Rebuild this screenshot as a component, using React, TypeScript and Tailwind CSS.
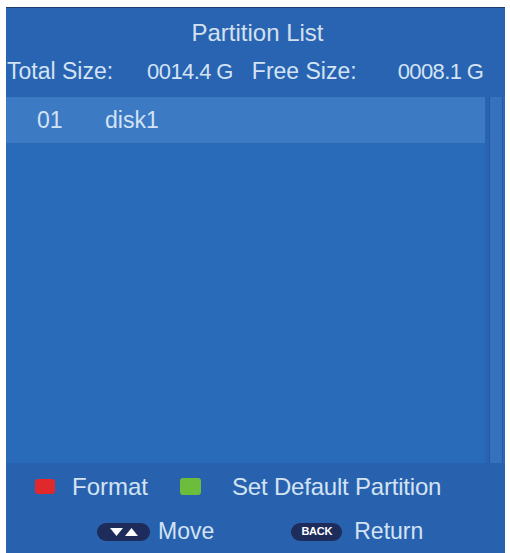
export default function App() {
  const font = { fontFamily: '"Liberation Sans", Arial, sans-serif' };
  return (
    <div className="w-[510px] h-[553px] bg-white pt-[7px] pl-[6px] pr-[5px]" style={font}>
      <div className="flex h-full flex-col border-t border-[#1c3d70] bg-[#2864b2] text-[#d3e3f4]">
        {/* header */}
        <div className="flex h-[50px] items-center justify-center pl-[4px] text-[24px] text-[#d5e0ee]">
          Partition List
        </div>
        <div className="flex h-[39px] items-center whitespace-nowrap pb-[12px] text-[23px]">
          <span className="ml-[1px]">Total Size:</span>
          <span className="ml-[34px] text-[22px] tracking-[-0.6px]">0014.4 G</span>
          <span className="ml-[19px]">Free Size:</span>
          <span className="ml-[41px] text-[22px] tracking-[-0.6px]">0008.1 G</span>
        </div>

        {/* list */}
        <div className="flex h-[366px]">
          <div className="flex-1 bg-[#2a6bb9]">
            <div className="flex h-[46px] items-center bg-[#3d7ac4] text-[23px]">
              <span className="ml-[31px] w-[68px]">01</span>
              <span>disk1</span>
            </div>
          </div>
          <div className="ml-[4px] w-[14px] border-x border-[#2559a3] bg-[#3571bd]" />
          <div className="w-[2px] bg-[#2a6bb9]" />
        </div>

        {/* footer */}
        <div className="flex flex-1 flex-col bg-[#2862ae] text-[24px]">
          <div className="flex h-[47px] items-center">
            <span className="ml-[29px] h-[15px] w-[20px] rounded-[3px] bg-[#e1292c]" />
            <span className="ml-[17px]">Format</span>
            <span className="ml-[32px] h-[17px] w-[21px] rounded-[3px] bg-[#6cbd3c]" />
            <span className="ml-[31px] tracking-[-0.2px]">Set Default Partition</span>
          </div>
          <div className="flex flex-1 items-center text-[23px]">
            <span className="ml-[91px] flex h-[18px] w-[53px] items-center justify-center gap-[2px] rounded-full bg-[#1d2c5a]">
              <svg width="13" height="8" viewBox="0 0 13 8">
                <path d="M0 0 H13 L6.5 8 Z" fill="#ffffff" />
              </svg>
              <svg width="13" height="8" viewBox="0 0 13 8">
                <path d="M0 8 H13 L6.5 0 Z" fill="#ffffff" />
              </svg>
            </span>
            <span className="ml-[8px]">Move</span>
            <span className="ml-[77px] flex h-[18px] w-[51px] items-center justify-center rounded-full bg-[#1d2c5a] text-[11px] font-bold tracking-[-0.3px] text-white">
              BACK
            </span>
            <span className="ml-[12px]">Return</span>
          </div>
        </div>
      </div>
    </div>
  );
}
